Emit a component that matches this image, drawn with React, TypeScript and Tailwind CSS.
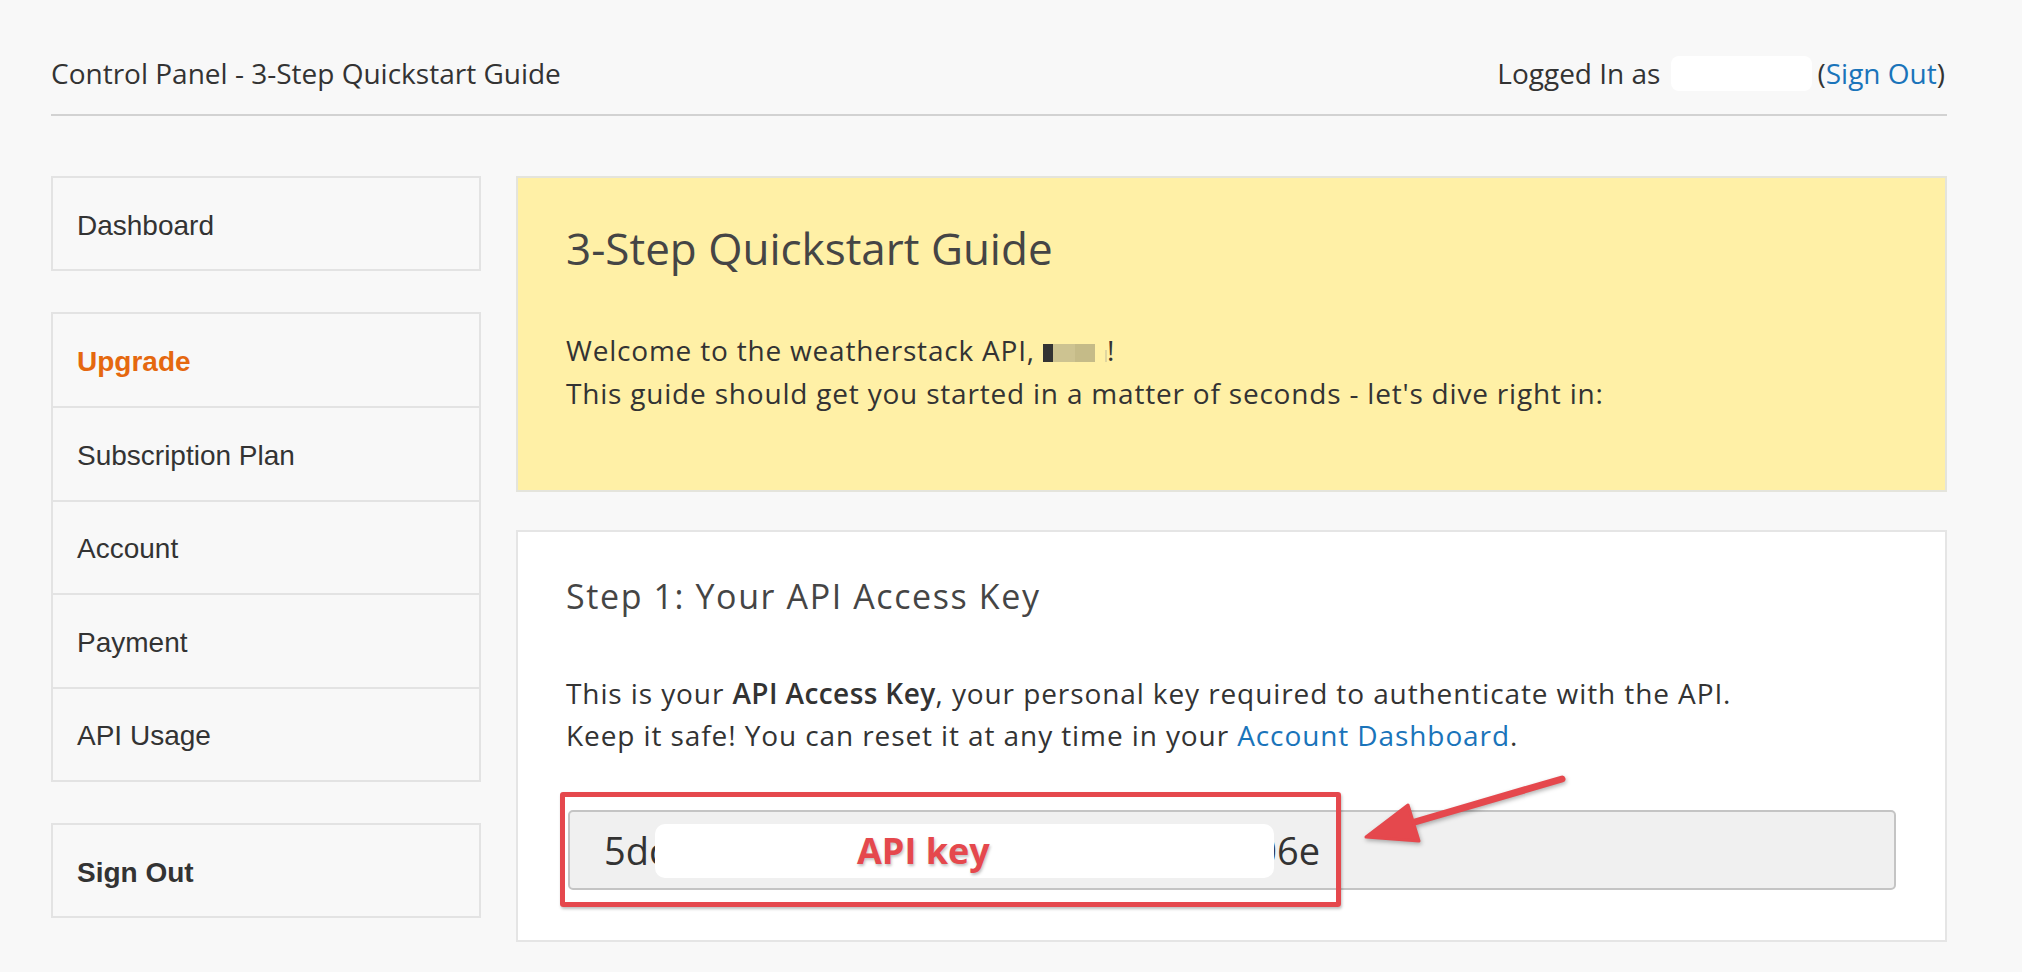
import React from "react";

const sans = { fontFamily: '"Open Sans", "Liberation Sans", sans-serif' };

function SideBox({ children, className = "" }: { children: React.ReactNode; className?: string }) {
  return (
    <div className={"h-[95px] border-2 border-[#e3e3e3] flex items-center px-[24px] pt-[4px] " + className}>
      {children}
    </div>
  );
}

export default function App() {
  const rows = [
    { label: "Upgrade", cls: "text-[#e5680f] font-semibold" },
    { label: "Subscription Plan", cls: "text-[#333]" },
    { label: "Account", cls: "text-[#333]" },
    { label: "Payment", cls: "text-[#333]" },
    { label: "API Usage", cls: "text-[#333]" },
  ];
  return (
    <div className="min-h-screen bg-[#f8f8f8] pl-[51px] pr-[75px] pt-[53px] pb-[29px] font-['Open_Sans',sans-serif] text-[#333]">
      {/* Header */}
      <div className="flex items-center justify-between border-b-2 border-[#d2d2d2] pb-[21px]">
        <div className="text-[28px] leading-[40px] text-[#333]">Control Panel - 3-Step Quickstart Guide</div>
        <div className="flex items-center text-[28px] leading-[40px] text-[#333] pr-[2px]">
          <span>Logged In as</span>
          <span className="inline-block w-[141px] h-[35px] rounded-[8px] bg-white ml-[11px] mr-[5px]" />
          <span>
            (<a className="text-[#1a74ba]">Sign Out</a>)
          </span>
        </div>
      </div>

      {/* Body */}
      <div className="flex mt-[60px] items-start">
        {/* Sidebar */}
        <div className="w-[430px] shrink-0 flex flex-col text-[28px] font-['Liberation_Sans',Arial,sans-serif]">
          <SideBox className="text-[#333]">Dashboard</SideBox>
          <div className="mt-[41px] border-2 border-[#e3e3e3] flex flex-col">
            {rows.map((r, i) => (
              <div
                key={r.label}
                className={
                  "flex items-center px-[24px] pt-[4px] " +
                  (i === 0 ? "h-[92px] " : "h-[93.5px] border-t-2 border-[#e3e3e3] ") +
                  r.cls
                }
              >
                {r.label}
              </div>
            ))}
          </div>
          <SideBox className="mt-[41px] text-[#333] font-semibold">Sign Out</SideBox>
        </div>

        {/* Main */}
        <div className="flex-1 ml-[35px] flex flex-col" style={sans}>
          <div className="border-2 border-[#e4e4dc] bg-[#fff0a6] px-[48px] pt-[44px] pb-[75px]">
            <h1 className="text-[44px] leading-[52px] text-[#454545] font-normal">3-Step Quickstart Guide</h1>
            <div className="mt-[55px] text-[28px] leading-[43px] tracking-[0.8px] text-[#333]">
              <div className="flex items-center">
                <span>Welcome to the weatherstack API,&nbsp;</span>
                <span className="inline-block w-[10px] h-[18px] bg-[#333] mt-[4px]" />
                <span className="inline-block w-[22px] h-[18px] bg-[#cdc391] mt-[4px]" />
                <span className="inline-block w-[20px] h-[18px] bg-[#c5bb88] mt-[4px]" />
                <span className="inline-block w-[2px] h-[12px] bg-[#e0d6a0] ml-[10px] mt-[10px]" />
                <span>!</span>
              </div>
              <div>This guide should get you started in a matter of seconds - let's dive right in:</div>
            </div>
          </div>

          <div className="mt-[38px] border-2 border-[#e5e5e5] bg-white px-[48px] pt-[44px] pb-[50px]">
            <h2 className="text-[34px] leading-[40px] text-[#454545] tracking-[1.6px] font-normal">Step 1: Your API Access Key</h2>
            <div className="mt-[56px] text-[28px] leading-[42px] tracking-[0.9px] text-[#333]">
              <div>
                This is your <span className="font-semibold tracking-[0.4px]">API Access Key</span>, your personal key required to authenticate with the API.
              </div>
              <div>
                Keep it safe! You can reset it at any time in your <a className="text-[#1a74ba]">Account Dashboard</a>.
              </div>
            </div>

            <div className="relative mt-[54px] mr-[1px] ml-[2px]">
              <div className="h-[80px] rounded-[5px] border-2 border-[#c4c4c4] bg-[#f0f0f0] flex items-center pl-[34px] text-[38px] text-[#333] overflow-hidden whitespace-nowrap">
                <span>5dc</span>
                <span className="inline-block w-[588px] shrink-0" />
                <span>06e</span>
              </div>
              {/* redaction overlay */}
              <div className="absolute left-[87px] top-[14px] w-[619px] h-[54px] rounded-[10px] bg-white">
                <span className="absolute left-[202px] top-[3px] text-[36px] leading-[48px] font-bold text-[#e5484d] [text-shadow:1px_2px_3px_rgba(0,0,0,0.25)]">
                  API key
                </span>
              </div>
              {/* annotation rectangle */}
              <div className="absolute left-[-8px] top-[-18px] w-[781px] h-[115px] border-[5px] border-[#e5484d] rounded-[3px] shadow-[1px_2px_3px_rgba(0,0,0,0.25)]" />
              {/* annotation arrow */}
              <svg
                className="absolute left-[778px] top-[-50px] drop-shadow-[1px_2px_2px_rgba(0,0,0,0.3)]"
                width="240"
                height="100"
                viewBox="0 0 240 100"
              >
                <line x1="216" y1="19" x2="62" y2="64" stroke="#e5484d" strokeWidth="7" strokeLinecap="round" />
                <polygon
                  points="20,77 62,45 73,81"
                  fill="#e5484d"
                  stroke="#e5484d"
                  strokeWidth="3"
                  strokeLinejoin="round"
                />
              </svg>
            </div>
          </div>
        </div>
      </div>
    </div>
  );
}
